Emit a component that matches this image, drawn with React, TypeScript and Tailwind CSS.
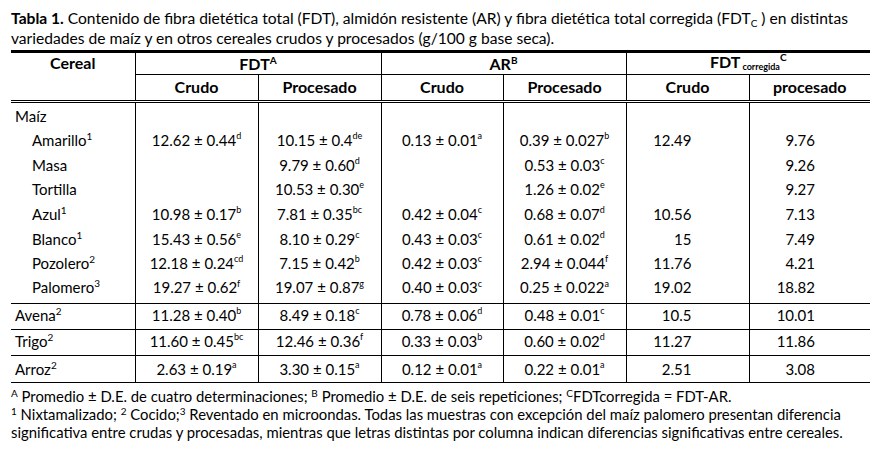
import React from "react";

type Val = [string, string] | null;
type Row = {
  name: string;
  sup?: string;
  indent?: boolean;
  fc?: Val;
  fp?: Val;
  ac?: Val;
  ap?: Val;
  cc?: string;
  cp?: string;
  borderBottom?: boolean;
  h: string;
  pad: string;
};

const rows: Row[] = [
  { name: "Maíz", h: "h-[25px]", pad: "pt-[2px]" },
  { name: "Amarillo", sup: "1", indent: true, fc: ["12.62 ± 0.44", "d"], fp: ["10.15 ± 0.4", "de"], ac: ["0.13 ± 0.01", "a"], ap: ["0.39 ± 0.027", "b"], cc: "12.49", cp: "9.76", h: "h-[25px]", pad: "pt-[1px]" },
  { name: "Masa", indent: true, fc: null, fp: ["9.79 ± 0.60", "d"], ac: null, ap: ["0.53 ± 0.03", "c"], cp: "9.26", h: "h-[25px]", pad: "pt-[1px]" },
  { name: "Tortilla", indent: true, fc: null, fp: ["10.53 ± 0.30", "e"], ac: null, ap: ["1.26 ± 0.02", "e"], cp: "9.27", h: "h-[25px]", pad: "pb-[0px]" },
  { name: "Azul", sup: "1", indent: true, fc: ["10.98 ± 0.17", "b"], fp: ["7.81 ± 0.35", "bc"], ac: ["0.42 ± 0.04", "c"], ap: ["0.68 ± 0.07", "d"], cc: "10.56", cp: "7.13", h: "h-[25px]", pad: "pb-[1px]" },
  { name: "Blanco", sup: "1", indent: true, fc: ["15.43 ± 0.56", "e"], fp: ["8.10 ± 0.29", "c"], ac: ["0.43 ± 0.03", "c"], ap: ["0.61 ± 0.02", "d"], cc: "15", cp: "7.49", h: "h-[25px]", pad: "pb-[1px]" },
  { name: "Pozolero", sup: "2", indent: true, fc: ["12.18 ± 0.24", "cd"], fp: ["7.15 ± 0.42", "b"], ac: ["0.42 ± 0.03", "c"], ap: ["2.94 ± 0.044", "f"], cc: "11.76", cp: "4.21", h: "h-[25px]", pad: "pb-[2px]" },
  { name: "Palomero", sup: "3", indent: true, fc: ["19.27 ± 0.62", "f"], fp: ["19.07 ± 0.87", "g"], ac: ["0.40 ± 0.03", "c"], ap: ["0.25 ± 0.022", "a"], cc: "19.02", cp: "18.82", borderBottom: true, h: "h-[27px]", pad: "pb-[5px]" },
  { name: "Avena", sup: "2", fc: ["11.28 ± 0.40", "b"], fp: ["8.49 ± 0.18", "c"], ac: ["0.78 ± 0.06", "d"], ap: ["0.48 ± 0.01", "c"], cc: "10.5", cp: "10.01", borderBottom: true, h: "h-[26px]", pad: "pb-[4px]" },
  { name: "Trigo", sup: "2", fc: ["11.60 ± 0.45", "bc"], fp: ["12.46 ± 0.36", "f"], ac: ["0.33 ± 0.03", "b"], ap: ["0.60 ± 0.02", "d"], cc: "11.27", cp: "11.86", borderBottom: true, h: "h-[26px]", pad: "pb-[4px]" },
  { name: "Arroz", sup: "2", fc: ["2.63 ± 0.19", "a"], fp: ["3.30 ± 0.15", "a"], ac: ["0.12 ± 0.01", "a"], ap: ["0.22 ± 0.01", "a"], cc: "2.51", cp: "3.08", borderBottom: true, h: "h-[27px]", pad: "pb-[1px]" },
];

function V({ v }: { v?: Val }) {
  if (!v) return null;
  return (
    <>
      {v[0]}
      <sup className="text-[9px] top-[-0.75em]">{v[1]}</sup>
    </>
  );
}

export default function App() {
  return (
    <div className="w-[876px] h-[451px] overflow-hidden bg-white text-black font-['Lato',sans-serif] text-[15px] pl-[11px] pt-[8px]">
      <div className="w-[865px] leading-[20px] text-[15.6px]">
        <div className="whitespace-nowrap">
          <span className="font-bold">Tabla 1.</span> Contenido de fibra dietética total (FDT), almidón resistente (AR) y fibra dietética total corregida (FDT
          <sub className="text-[10px] bottom-[-0.3em]">C</sub> ) en distintas
        </div>
        <div>variedades de maíz y en otros cereales crudos y procesados (g/100 g base seca).</div>
      </div>
      <div className="w-[859px] h-[3px] bg-black mt-[2px]" />
      <table className="w-[859px] table-fixed border-collapse leading-[18px]">
        <colgroup>
          <col className="w-[124px]" />
          <col className="w-[123px]" />
          <col className="w-[123px]" />
          <col className="w-[122px]" />
          <col className="w-[123px]" />
          <col className="w-[123px]" />
          <col className="w-[121px]" />
        </colgroup>
        <thead>
          <tr className="h-[21px] font-bold text-[16px]">
            <td rowSpan={2} className="align-top text-center p-0 pt-[1px] border-b-[3px] border-double border-black">
              Cereal
            </td>
            <td colSpan={2} className="text-center p-0 border-l border-b border-black">
              FDT<sup className="text-[10px] top-[-0.6em]">A</sup>
            </td>
            <td colSpan={2} className="text-center p-0 border-l border-b border-black">
              AR<sup className="text-[10px] top-[-0.6em]">B</sup>
            </td>
            <td colSpan={2} className="text-center p-0 border-l border-b border-black">
              FDT<span className="text-[9px] relative top-[2px] ml-[2px]">corregida</span>
              <sup className="text-[10px] top-[-0.7em]">C</sup>
            </td>
          </tr>
          <tr className="h-[27px] font-bold text-[16px]">
            {["Crudo", "Procesado", "Crudo", "Procesado", "Crudo", "procesado"].map((t, i) => (
              <td key={i} className="text-center p-0 pb-[2px] border-l border-b-[3px] border-double border-black">
                {t}
              </td>
            ))}
          </tr>
        </thead>
        <tbody>
          {rows.map((r, i) => {
            const bb = r.borderBottom ? "border-b border-black" : "";
            const pad = r.pad;
            return (
              <tr key={i} className={r.h}>
                <td className={`p-0 ${pad} ${bb} ${r.indent ? "pl-[21px]" : "pl-[4px]"}`}>
                  {r.name}
                  {r.sup && <sup className="text-[10px] top-[-0.6em]">{r.sup}</sup>}
                </td>
                <td className={`p-0 ${pad} text-center border-l border-black ${bb}`}>
                  <V v={r.fc} />
                </td>
                <td className={`p-0 ${pad} text-center border-l border-black ${bb}`}>
                  <V v={r.fp} />
                </td>
                <td className={`p-0 ${pad} text-center border-l border-black ${bb}`}>
                  <V v={r.ac} />
                </td>
                <td className={`p-0 ${pad} text-center border-l border-black ${bb}`}>
                  <V v={r.ap} />
                </td>
                <td className={`p-0 ${pad} pr-[57px] text-right border-l border-black ${bb}`}>{r.cc}</td>
                <td className={`p-0 ${pad} pr-[55px] text-right border-l border-black ${bb}`}>{r.cp}</td>
              </tr>
            );
          })}
        </tbody>
      </table>
      <div className="w-[865px] mt-[4px] leading-[18px] text-[14.85px]">
        <div>
          <sup className="text-[10px] top-[-0.5em]">A</sup> Promedio ± D.E. de cuatro determinaciones;{" "}
          <sup className="text-[10px] top-[-0.5em]">B</sup> Promedio ± D.E. de seis repeticiones;{" "}
          <sup className="text-[10px] top-[-0.5em]">C</sup>FDTcorregida = FDT-AR.
        </div>
        <div className="whitespace-nowrap">
          <sup className="text-[10px] top-[-0.5em]">1</sup> Nixtamalizado; <sup className="text-[10px] top-[-0.5em]">2</sup> Cocido;
          <sup className="text-[10px] top-[-0.5em]">3</sup> Reventado en microondas. Todas las muestras con excepción del maíz palomero presentan diferencia
        </div>
        <div className="whitespace-nowrap">
          significativa entre crudas y procesadas, mientras que letras distintas por columna indican diferencias significativas entre cereales.
        </div>
      </div>
    </div>
  );
}
